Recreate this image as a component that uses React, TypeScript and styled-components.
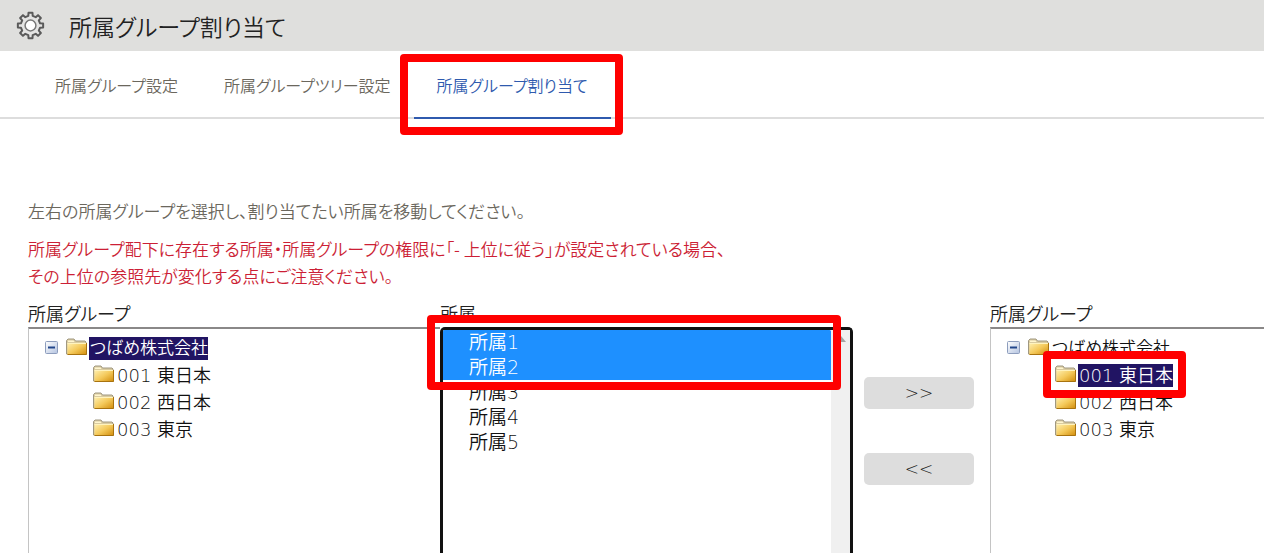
import React from "react";
import styled, { createGlobalStyle, css } from "styled-components";

const GlobalStyle = createGlobalStyle`
  * { box-sizing: border-box; }
  body {
    margin: 0;
    background: #fff;
    color: #111;
    font-family: "DejaVu Sans", "Noto Sans CJK JP", sans-serif;
    font-size: 18px;
    font-weight: 350;
    line-height: 27px;
    font-feature-settings: "palt";
  }
`;

const Page = styled.div`
  display: flex;
  flex-direction: column;
  min-height: 100vh;
  overflow-x: hidden;
`;

const Header = styled.header`
  display: flex;
  align-items: center;
  gap: 24px;
  height: 51px;
  padding: 0 16px;
  background: #dfdfdd;
`;

const Title = styled.h1`
  margin: 0;
  font-size: 23px;
  line-height: 48px;
  font-weight: 350;
  font-family: "Noto Sans CJK JP", sans-serif;
  color: #222;
  white-space: nowrap;
`;

const Tabs = styled.nav`
  display: flex;
  height: 68px;
  padding-left: 32px;
  border-bottom: 2px solid #dddddd;
`;

const Tab = styled.a<{ $active?: boolean }>`
  position: relative;
  height: 68px;
  padding: 0 23px;
  line-height: 68px;
  font-family: "Noto Sans CJK JP", sans-serif;
  font-size: 16px;
  color: #6b675d;
  text-decoration: none;
  white-space: nowrap;
  ${(p) => p.$active && css`
    color: #2f5aae;
    border-bottom: 2px solid #2f5aae;
  `}
`;

const Marker = styled.span<{ $inset: string }>`
  position: absolute;
  inset: ${(p) => p.$inset};
  z-index: 2;
  border: 8px solid #f00;
  border-radius: 4px;
  pointer-events: none;
`;

const Main = styled.main`
  display: flex;
  flex: 1;
  flex-direction: column;
  padding: 78px 0 0 28px;
`;

const Note = styled.p<{ $warn?: boolean }>`
  margin: 0 0 11px;
  font-family: "Noto Sans CJK JP", sans-serif;
  font-size: 17px;
  color: ${(p) => (p.$warn ? "#cc1f36" : "#6b675d")};
`;

const Columns = styled.div`
  display: grid;
  flex: 1;
  grid-template-columns: 412fr 413fr 137px 274fr;
`;

const Column = styled.section`
  display: flex;
  flex-direction: column;
  min-width: 0;
`;

const Label = styled.label`
  line-height: 27px;
  font-family: "Noto Sans CJK JP", sans-serif;
  color: #222;
`;

const TreePanel = styled.div`
  flex: 1;
  padding: 6px 0 0 16px;
  border-top: 2px solid #8a8888;
  border-left: 1px solid #c4c4c4;
`;

const Branch = styled.ul`
  margin: 0;
  padding: 0;
  list-style: none;
  & & { padding-left: 48px; }
`;

const Row = styled.div`
  position: relative;
  display: flex;
  align-items: center;
  width: max-content;
  height: 27px;
`;

const Toggle = styled.button`
  display: flex;
  margin: 0 8px 2px 0;
  padding: 0;
  border: 0;
  background: none;
`;

const FolderSvg = styled.svg`
  margin: 0 2px 4px 0;
`;

const Name = styled.span<{ $selected?: boolean; $root?: boolean }>`
  padding-left: 1px;
  font-size: ${(p) => (p.$root ? 17 : 18)}px;
  line-height: 23px;
  white-space: nowrap;
  color: ${(p) => (p.$selected ? "#fff" : "#111")};
  background: ${(p) => (p.$selected ? "#211463" : "transparent")};
`;

const ListBox = styled.div`
  position: relative;
  display: flex;
  flex: 1;
  border: 3px solid #111;
  border-bottom: 0;
  border-radius: 5px 5px 0 0;
`;

const List = styled.select`
  flex: 1;
  min-width: 0;
  margin: 0;
  padding: 0;
  border: 0;
  outline: 0;
  background: #fff;
  overflow: hidden;
  font-family: "DejaVu Sans", "Noto Sans CJK JP", sans-serif;
  font-size: 19px;
  color: #111;
  option {
    display: flex;
    align-items: center;
    min-height: 25px;
    height: 25px;
    padding: 0 0 5px 26px;
    font-weight: 350;
  }
  option:checked {
    color: #fff;
    -webkit-text-fill-color: #fff;
    background: #1e90ff linear-gradient(#1e90ff, #1e90ff);
  }
`;

const ScrollTrack = styled.div`
  display: flex;
  justify-content: center;
  width: 19px;
  padding-top: 6px;
  background: #f0f0f0;
`;

const Transfer = styled.div`
  display: flex;
  flex-direction: column;
  gap: 44px;
  padding: 77px 16px 0 11px;
`;

const MoveButton = styled.button`
  height: 32px;
  padding: 0;
  border: 0;
  border-radius: 5px;
  background: #dddddd;
  color: #222;
  font-family: "DejaVu Sans", sans-serif;
  font-weight: 200;
  font-size: 17px;
`;

const GearIcon = () => {
  const pts: string[] = [];
  for (let i = 0; i < 8; i++) {
    const add = (deg: number, r: number) => {
      const a = ((i * 45 + deg) * Math.PI) / 180;
      pts.push(`${(14.5 + r * Math.sin(a)).toFixed(2)} ${(14.5 - r * Math.cos(a)).toFixed(2)}`);
    };
    add(-13, 9.8);
    add(-9, 12.8);
    add(9, 12.8);
    add(13, 9.8);
  }
  return (
    <svg width="29" height="29" viewBox="0 0 29 29" aria-hidden="true">
      <path
        d={`M${pts.join("L")}Z`}
        fill="#e4e4e3"
        stroke="#5a5a5a"
        strokeWidth="2"
        strokeLinejoin="round"
      />
      <circle cx="14.5" cy="14.5" r="5.4" fill="#fff" stroke="#777" strokeWidth="1.500" />
    </svg>
  );
};

const Folder = () => (
  <FolderSvg width="21" height="18" viewBox="0 0 21 18" aria-hidden="true">
    <defs>
      <linearGradient id="folder" x1="0" y1="0" x2="1" y2="1">
        <stop offset="0" stopColor="#fff0b0" />
        <stop offset="0.5" stopColor="#f4c95a" />
        <stop offset="1" stopColor="#d08a08" />
      </linearGradient>
    </defs>
    <path d="M.5 16V2.500L2 1h6l1.500 2H19l1 1v12Z" fill="#d9cba0" stroke="#a09880" />
    <path d="M2 2.500h5.500L8.500 4H2Z" fill="#fff6cf" />
    <path d="M1.500 5H20.500V17H1.500Z" fill="url(#folder)" />
    <path d="M1.500 5.500H20" stroke="#fff3bd" />
    <path d="M1.500 16.500H20.500V5" fill="none" stroke="#a8730f" />
  </FolderSvg>
);

const Minus = () => (
  <svg width="13" height="13" viewBox="0 0 13 13" aria-hidden="true">
    <defs>
      <linearGradient id="minus" x1="0" y1="0" x2="1" y2="1">
        <stop offset="0" stopColor="#fff" />
        <stop offset="1" stopColor="#b4c3e0" />
      </linearGradient>
    </defs>
    <rect x=".5" y=".5" width="12" height="12" rx="1" fill="url(#minus)" stroke="#8d9dbd" />
    <path d="M3 6.500h7" stroke="#21468b" strokeWidth="2" />
  </svg>
);

const groups = ["001 東日本", "002 西日本", "003 東京"];

const Tree = ({ selected, marked }: { selected: string; marked?: boolean }) => (
  <TreePanel>
    <Branch>
      <li>
        <Row>
          <Toggle type="button" aria-label="折りたたむ"><Minus /></Toggle>
          <Folder />
          <Name $root $selected={selected === "つばめ株式会社"}>つばめ株式会社</Name>
        </Row>
        <Branch>
          {groups.map((g) => (
            <li key={g}>
              <Row>
                <Folder />
                <Name $selected={selected === g}>{g}</Name>
                {marked && selected === g && <Marker $inset="-11px -13px -9px -12px" />}
              </Row>
            </li>
          ))}
        </Branch>
      </li>
    </Branch>
  </TreePanel>
);

export default function App() {
  return (
    <Page>
      <GlobalStyle />
      <Header>
        <GearIcon />
        <Title>所属グループ割り当て</Title>
      </Header>
      <Tabs>
        <Tab href="#groups">所属グループ設定</Tab>
        <Tab href="#tree">所属グループツリー設定</Tab>
        <Tab href="#assign" $active>
          所属グループ割り当て
          <Marker $inset="3px -12px -18px -14px" />
        </Tab>
      </Tabs>
      <Main>
        <Note>左右の所属グループを選択し、割り当てたい所属を移動してください。</Note>
        <Note $warn>
          所属グループ配下に存在する所属・所属グループの権限に「- 上位に従う」が設定されている場合、
          <br />
          その上位の参照先が変化する点にご注意ください。
        </Note>
        <Columns>
          <Column>
            <Label as="span">所属グループ</Label>
            <Tree selected="つばめ株式会社" />
          </Column>
          <Column>
            <Label htmlFor="members">所属</Label>
            <ListBox>
              <List id="members" multiple size={8} defaultValue={["1", "2"]}>
                {["1", "2", "3", "4", "5"].map((n) => (
                  <option key={n} value={n}>{`所属${n}`}</option>
                ))}
              </List>
              <ScrollTrack>
                <svg width="10" height="6" viewBox="0 0 10 6" aria-hidden="true">
                  <path d="M0 6L5 0L10 6Z" fill="#a3a3a3" />
                </svg>
              </ScrollTrack>
              <Marker $inset="-15px 9px auto -16px" style={{ height: 75 }} />
            </ListBox>
          </Column>
          <Transfer>
            <MoveButton type="button">&gt;&gt;</MoveButton>
            <MoveButton type="button">&lt;&lt;</MoveButton>
          </Transfer>
          <Column>
            <Label as="span">所属グループ</Label>
            <Tree selected="001 東日本" marked />
          </Column>
        </Columns>
      </Main>
    </Page>
  );
}
